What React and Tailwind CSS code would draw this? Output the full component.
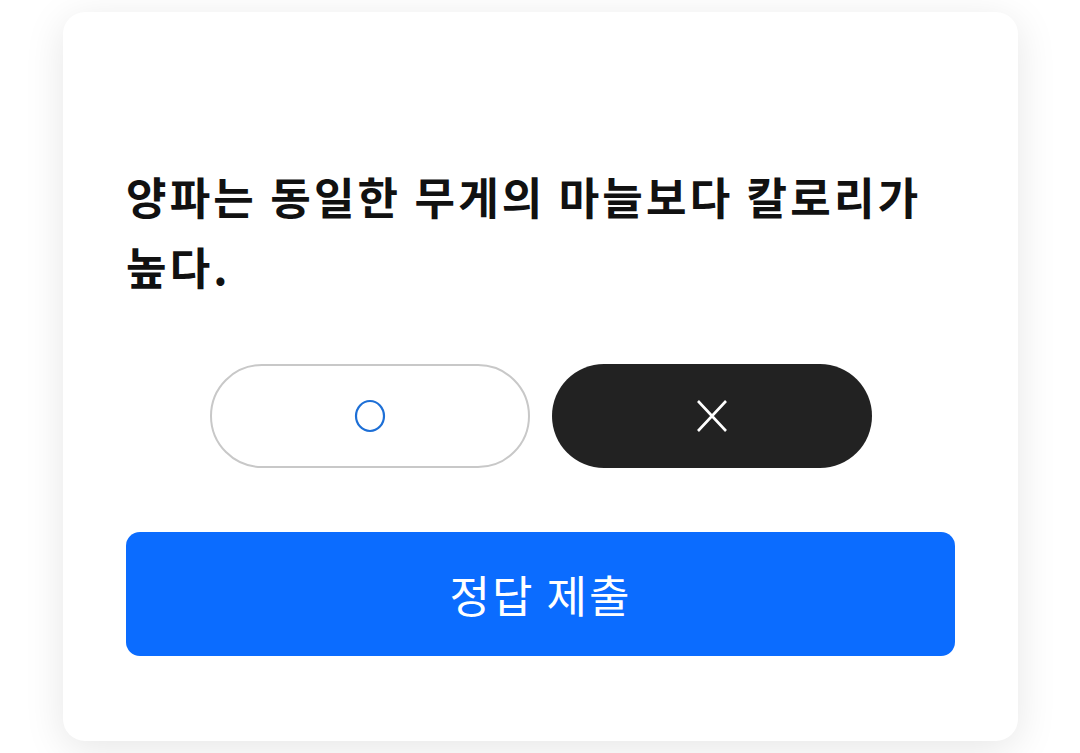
import React, { useState } from "react";

export default function App() {
  const [answer, setAnswer] = useState("X");

  return (
    <div
      className="min-h-screen bg-white pl-[63px] pr-[62px] pt-3"
      style={{ fontFamily: '"Noto Sans CJK KR", "Noto Sans", sans-serif' }}
    >
      <div className="rounded-[22px] bg-white px-[63px] pt-[149px] pb-[85px] shadow-[0_8px_40px_rgba(0,0,0,0.1)]">
        {/* 문제 */}
        <h1 className="text-[44px] font-bold leading-[70px] tracking-[3.2px] text-[#111]">
          양파는 동일한 무게의 마늘보다 칼로리가 높다.
        </h1>

        {/* O / X 선택 */}
        <div className="mt-[63px] flex justify-center gap-[22px]">
          <button
            onClick={() => setAnswer("O")}
            className={
              answer === "O"
                ? "flex h-[104px] w-[320px] items-center justify-center rounded-full bg-[#222]"
                : "flex h-[104px] w-[320px] items-center justify-center rounded-full border-2 border-[#c8c8c8] bg-white"
            }
          >
            <svg width="34" height="34" viewBox="0 0 34 34" fill="none">
              <ellipse cx="17" cy="17" rx="14" ry="15" stroke="#1d6fd6" strokeWidth="2.2" />
            </svg>
          </button>
          <button
            onClick={() => setAnswer("X")}
            className={
              answer === "X"
                ? "flex h-[104px] w-[320px] items-center justify-center rounded-full bg-[#222]"
                : "flex h-[104px] w-[320px] items-center justify-center rounded-full border-2 border-[#c8c8c8] bg-white"
            }
          >
            <svg width="34" height="34" viewBox="0 0 34 34" fill="none">
              <path d="M3 2 L31 32 M31 2 L3 32" stroke={answer === "X" ? "#fff" : "#222"} strokeWidth="2.6" />
            </svg>
          </button>
        </div>

        {/* 제출 */}
        <button className="mt-[64px] flex h-[124px] w-full items-center justify-center rounded-[14px] bg-[#0b6cff] text-[44px] font-normal tracking-[2px] text-white">
          정답 제출
        </button>
      </div>
    </div>
  );
}
